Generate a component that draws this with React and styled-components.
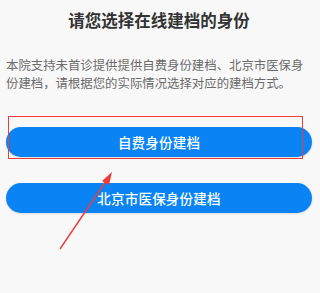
import styled, { createGlobalStyle } from 'styled-components';

const Global = createGlobalStyle`
    html, body {
        margin: 0;
        padding: 0;
        background: #f8f8f8;
    }
    body {
        font-family: "Noto Sans CJK SC", "Noto Sans", sans-serif;
    }
`;

const App = () => {
    return (
        <>
            <Global />
            <Page>
                <Title>请您选择在线建档的身份</Title>
                <Intro>
                    本院支持未首诊提供提供自费身份建档、北京市医保身份建档，请根据您的实际情况选择对应的建档方式。
                </Intro>
                <Buttons>
                    <Button>自费身份建档</Button>
                    <Button>北京市医保身份建档</Button>
                </Buttons>
                <Highlight />
                <Arrow width="320" height="293" viewBox="0 0 320 293">
                    <line x1="60" y1="249" x2="108" y2="178" stroke="#ee3b3b" strokeWidth="1.4" />
                    <polygon points="112,172 102,181 109,185" fill="#ee3b3b" />
                </Arrow>
            </Page>
        </>
    );
};

const Page = styled.div`
    position: relative;
    box-sizing: border-box;
    width: 320px;
    height: 293px;
    padding: 10px 8px 0 6px;
    overflow: hidden;
`;

const Title = styled.h1`
    margin: 0;
    font-size: 16.5px;
    line-height: 20px;
    font-weight: 700;
    color: #333;
    text-align: center;
`;

const Intro = styled.p`
    margin: 27px 0 0;
    font-size: 12.4px;
    line-height: 17.5px;
    color: #6b6b6b;
`;

const Buttons = styled.div`
    display: flex;
    flex-direction: column;
    gap: 26px;
    margin-top: 35px;
`;

const Button = styled.button`
    display: flex;
    align-items: center;
    justify-content: center;
    height: 30px;
    border: none;
    border-radius: 15px;
    background: #0a84f5;
    color: #fff;
    font-family: inherit;
    font-size: 13.5px;
    font-weight: 500;
    letter-spacing: 0.2px;
    box-shadow: 0 1px 2px rgba(0, 0, 0, 0.12);
`;

const Highlight = styled.div`
    position: absolute;
    left: 8px;
    top: 116px;
    width: 293px;
    height: 41px;
    border: 1px solid #ee3b3b;
    pointer-events: none;
`;

const Arrow = styled.svg`
    position: absolute;
    left: 0;
    top: 0;
    pointer-events: none;
`;

export default App;
